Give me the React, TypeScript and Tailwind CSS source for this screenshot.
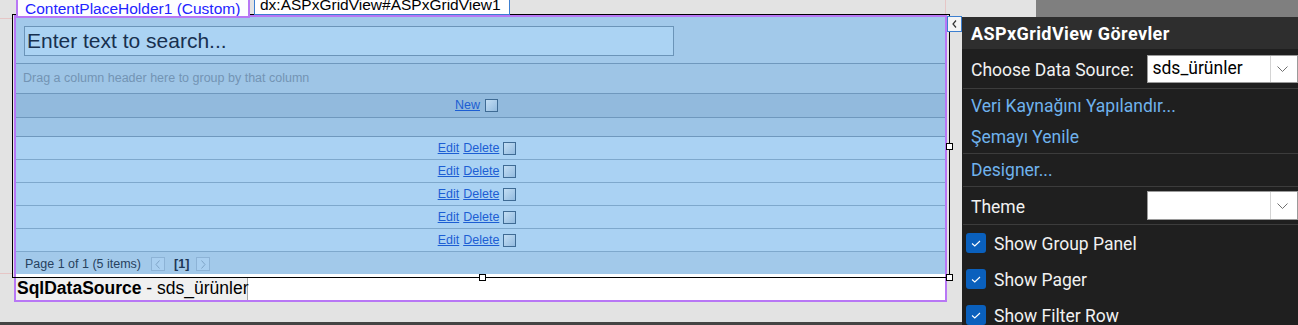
import React from 'react'

const GRID_FONT = "font-['Liberation_Sans',Arial,sans-serif]"
const UI_FONT = "font-['Roboto','Noto_Sans',sans-serif]"

const DATA_ROWS = [1, 2, 3, 4, 5]

function GridCheck() {
  return (
    <span className="inline-block w-[13px] h-[13px] border border-[#3f6b94] bg-gradient-to-br from-[#c3def4] to-[#93bbdf]" />
  )
}

function PagerButton({ dir }: { dir: 'prev' | 'next' }) {
  return (
    <span className="flex items-center justify-center w-[14px] h-[14px] border border-[#8db3d6] bg-[#a9cff0]">
      <svg width="6" height="9" viewBox="0 0 6 9" fill="none">
        <path
          d={dir === 'prev' ? 'M4.5 0.5 L1 4.5 L4.5 8.5' : 'M1.5 0.5 L5 4.5 L1.5 8.5'}
          stroke="#7fa4c7"
          strokeWidth="1"
        />
      </svg>
    </span>
  )
}

function Handle({ className }: { className: string }) {
  return <span className={`absolute z-20 w-[7px] h-[7px] bg-white border border-black ${className}`} />
}

function Chevron() {
  return (
    <svg width="11" height="6" viewBox="0 0 11 6" fill="none">
      <path d="M0.5 0.5 L5.5 5.5 L10.5 0.5" stroke="#707070" strokeWidth="1" />
    </svg>
  )
}

function Select({ value, height }: { value?: string; height: string }) {
  return (
    <div className={`flex w-[151px] ${height} border border-[#9a9a9a] bg-white`}>
      <div className="flex-1 pl-[4px] flex items-center text-black text-[17.5px] leading-[21px]">{value}</div>
      <div className="w-[27px] border-l border-[#d4d4d4] flex items-center justify-center pr-[4px]">
        <Chevron />
      </div>
    </div>
  )
}

function Tick() {
  return (
    <span className="flex items-center justify-center w-[20px] h-[20px] rounded-[3px] bg-[#0a60bd]">
      <svg width="10" height="7" viewBox="0 0 10 7" fill="none">
        <path d="M1 3.5 L3.8 6 L9 1" stroke="white" strokeWidth="1.1" />
      </svg>
    </span>
  )
}

function Designer() {
  return (
    <div className={`relative w-[962px] h-full flex flex-col ${GRID_FONT}`}>
      {/* guide lines */}
      <span className="absolute left-0 top-[18px] w-[13px] h-px bg-[#e6c6c6]" />
      <span className="absolute left-0 top-[273px] w-[12px] h-px bg-[#e6c6c6]" />
      <span className="absolute left-[945px] top-0 w-px h-[14px] bg-[#e6c6c6]" />

      {/* tabs */}
      <div className="absolute z-20 left-[16px] top-0 w-[234px] h-[18px] bg-[#fdfdff] border-x-2 border-b-2 border-[#b877f5] overflow-hidden pl-[7px] text-[15.5px] leading-[18px] text-[#2323ff] whitespace-nowrap">
        ContentPlaceHolder1 (Custom)
      </div>
      <div className="absolute z-20 left-[254px] top-0 w-[256px] h-[15px] bg-white border-x border-b border-[#3d7fd0] overflow-hidden pl-[5px] text-[15.5px] leading-[10px] text-black whitespace-nowrap">
        dx:ASPxGridView#ASPxGridView1
      </div>

      {/* content placeholder frame */}
      <div className="ml-[14px] mt-[15px] w-[933px] h-[287px] border-2 border-[#b877f5] bg-white flex flex-col">
        <div className="flex flex-col h-[257px]">
          <div className="h-[47px] pt-[9px] pl-[8px] bg-[#a2c9ea] border-b border-[#6f98bd]">
            <div className="w-[650px] h-[30px] border border-[#6b94b8] bg-[#abd3f3] pl-[2px] text-[21px] leading-[28px] text-[#17304f]">
              Enter text to search...
            </div>
          </div>
          <div className="h-[30px] pl-[7px] flex items-center bg-[#9ec5e6] border-b border-[#6f98bd] text-[12.5px] text-[#7394b4]">
            Drag a column header here to group by that column
          </div>
          <div className="h-[24px] flex items-center justify-center pr-[8px] bg-[#92badd] border-b border-[#6f98bd] text-[12.5px]">
            <a className="text-[#1c5ed3] underline">New</a>
            <span className="ml-[5px] flex"><GridCheck /></span>
          </div>
          <div className="h-[19px] bg-[#9cc4e6] border-b border-[#6f98bd]" />
          {DATA_ROWS.map((r) => (
            <div
              key={r}
              className="h-[23px] flex items-center justify-center pr-[7px] bg-[#aad2f3] border-b border-[#7ea8cc] text-[12.5px]"
            >
              <a className="text-[#1c5ed3] underline">Edit</a>
              <a className="ml-[4px] text-[#1c5ed3] underline">Delete</a>
              <span className="ml-[4px] flex"><GridCheck /></span>
            </div>
          ))}
          <div className="h-[22px] flex items-center pt-[2px] pl-[9px] bg-[#a2c9ea] text-[12.5px] text-[#27425f]">
            <span>Page 1 of 1 (5 items)</span>
            <span className="ml-[10px]"><PagerButton dir="prev" /></span>
            <span className="ml-[9px] font-bold text-[#1d3756]">[1]</span>
            <span className="ml-[7px]"><PagerButton dir="next" /></span>
          </div>
        </div>
        <div className="mt-[3px] h-[23px] w-[232px] bg-[#f0f0f0] border-r border-[#a8a8a8] pl-[1px] text-[17.5px] leading-[23px] text-black whitespace-nowrap">
          <span className="font-bold">SqlDataSource</span> - sds_ürünler
        </div>
      </div>

      <div className="mt-auto h-[3px] bg-[#444444]" />

      {/* selection adorner */}
      <div className="absolute z-10 left-[12px] top-[14px] w-[938px] h-[264px] border border-black pointer-events-none" />
      <Handle className="left-[946px] top-[143px]" />
      <Handle className="left-[946px] top-[274px]" />
      <Handle className="left-[479px] top-[274px]" />
      <button className="absolute z-30 left-[947px] top-[16px] w-[15px] h-[16px] flex items-center justify-center bg-[#f4f4f4] border border-[#3d7fd0]">
        <svg width="5" height="8" viewBox="0 0 5 8" fill="none">
          <path d="M4 0.5 L1 4 L4 7.5" stroke="#333" strokeWidth="1.2" />
        </svg>
      </button>
    </div>
  )
}

function TasksPanel() {
  const sep = 'border-b border-[#3c3c3c]'
  return (
    <div className={`w-[336px] h-full flex flex-col ${UI_FONT}`}>
      <div className="h-[17px] flex shrink-0">
        <div className="w-[74px]" />
        <div className="flex-1 bg-[#7f7f7f]" />
      </div>
      <div className="flex-1 flex flex-col overflow-hidden bg-[#1f1f1f] text-[17.5px] leading-[21px] text-[#f1f1f1]">
        <div className="h-[32px] shrink-0 pl-[9px] flex items-center bg-[#2e2e2e] font-bold text-[18px] tracking-[0.4px] text-white">
          ASPxGridView Görevler
        </div>
        <div className="ml-[1px] flex flex-col">
          <div className={`h-[40px] flex items-center ${sep}`}>
            <span className="w-[185px] pl-[8px] pt-[3px]">Choose Data Source:</span>
            <Select value="sds_ürünler" height="h-[28px]" />
          </div>
          <div className="h-[32px] pl-[8px] flex items-center pt-[2px] text-[#6fb2ec]">Veri Kaynağını Yapılandır...</div>
          <div className={`h-[33px] pl-[8px] flex items-center text-[#6fb2ec] ${sep}`}>Şemayı Yenile</div>
          <div className={`h-[33px] pl-[8px] flex items-center text-[#6fb2ec] ${sep}`}>Designer...</div>
          <div className={`h-[38px] flex items-center ${sep}`}>
            <span className="w-[185px] pl-[8px] pt-[3px]">Theme</span>
            <Select height="h-[29px]" />
          </div>
          {['Show Group Panel', 'Show Pager', 'Show Filter Row'].map((label) => (
            <div key={label} className="h-[36px] shrink-0 pl-[3px] flex items-center">
              <Tick />
              <span className="ml-[8px] pt-[2px]">{label}</span>
            </div>
          ))}
        </div>
      </div>
    </div>
  )
}

export default function App() {
  return (
    <div className="flex w-[1298px] h-[325px] overflow-hidden bg-[#e3e3e3]">
      <Designer />
      <TasksPanel />
    </div>
  )
}
